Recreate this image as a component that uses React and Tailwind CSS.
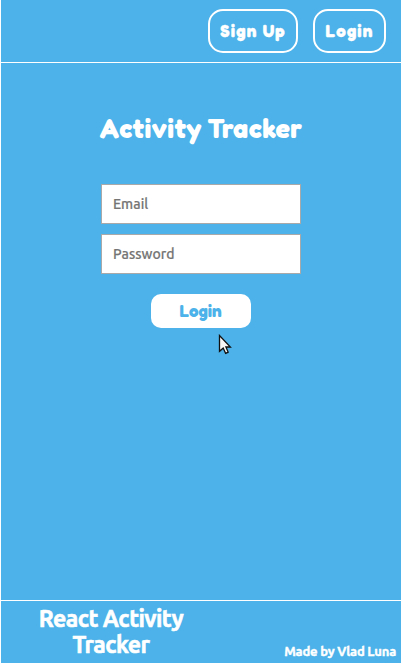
import React from 'react';

const rounded = "font-['Fredoka','Lato',sans-serif] font-bold [font-variant-ligatures:none]";

function NavButton({ children, className }) {
  return (
    <button className={`${rounded} h-[44px] whitespace-nowrap rounded-[15px] border-2 border-white pb-[2px] text-[17px] leading-none text-white [-webkit-text-stroke:0.3px_currentColor] ${className}`}>
      {children}
    </button>
  );
}

function Field({ type, placeholder, className }) {
  return (
    <input
      type={type}
      placeholder={placeholder}
      className={`h-[40px] w-[200px] border border-[#a9a9a9] bg-white px-[11px] font-['Ubuntu','Noto_Sans',sans-serif] text-[14px] font-medium tracking-[0.05px] outline-none [-webkit-text-stroke:0.2px_#757575] placeholder:text-[#757575] placeholder:opacity-100 ${className}`}
    />
  );
}

function Cursor() {
  return (
    <svg className="absolute left-[217px] top-[334px]" width="16" height="22" viewBox="0 0 16 22">
      <path d="M2 2 V18.2 L5.6 15.2 L8.1 20.3 L11 19 L8.7 13.8 H13 Z" fill="#000" opacity="0.2" />
      <path d="M1.5 1.5 V17.3 L5.2 14 L7.6 19.3 L10.1 18.1 L7.9 13 H12.4 Z" fill="#f7f7f7" stroke="#111" strokeWidth="1.3" strokeLinejoin="miter" />
    </svg>
  );
}

export default function App() {
  return (
    <div className="h-[664px] w-[402px] overflow-hidden bg-white px-px pb-px">
      <div className="relative flex h-[663px] w-[400px] flex-col bg-[#4cb2e9]">
        <header className="flex h-[63px] shrink-0 items-start justify-end gap-[15px] border-b border-white pr-[15px] pt-[9px]">
          <NavButton className="w-[90px] tracking-[1.2px]">Sign Up</NavButton>
          <NavButton className="w-[73px] tracking-[1.2px]">Login</NavButton>
        </header>
        <main className="flex flex-1 flex-col items-center">
          <h1 className={`${rounded} mt-[48px] h-[34px] whitespace-nowrap text-[27px] leading-[34px] tracking-[0.3px] [word-spacing:-1px] text-white`}>Activity Tracker</h1>
          <form className="flex flex-col items-center" onSubmit={(e) => e.preventDefault()}>
            <Field type="email" placeholder="Email" className="mt-[39px]" />
            <Field type="password" placeholder="Password" className="mt-[10px]" />
            <button className={`${rounded} mt-[20px] h-[34px] w-[100px] rounded-[10px] bg-white pb-[2px] pr-[1px] text-[17px] leading-none text-[#4cb2e9]`}>Login</button>
          </form>
        </main>
        <footer className="flex h-[63px] shrink-0 justify-between border-t border-white font-['Ubuntu','Noto_Sans',sans-serif] font-bold text-white">
          <h2 className="ml-[20px] mt-[5px] w-[180px] text-center text-[23px] leading-[26px] tracking-[-0.5px] [-webkit-text-stroke:0.6px_currentColor]">React Activity<br />Tracker</h2>
          <p className="mr-[5px] self-end whitespace-nowrap pb-[3px] text-[13px] leading-[18px] tracking-[-0.2px] [-webkit-text-stroke:0.4px_currentColor]">Made by Vlad Luna</p>
        </footer>
        <Cursor />
      </div>
    </div>
  );
}
